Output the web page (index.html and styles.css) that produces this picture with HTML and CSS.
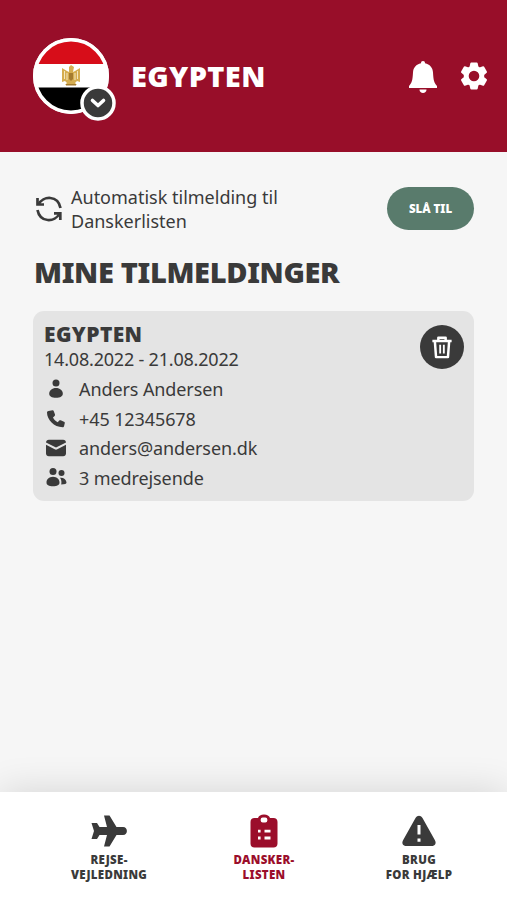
FILE: index.html
```html
<!DOCTYPE html>
<html lang="da">
<head>
  <meta charset="utf-8">
  <meta name="viewport" content="width=device-width, initial-scale=1">
  <title>Danskerlisten</title>
  <link rel="stylesheet" href="styles.css">
</head>
<body>
  <header>
    <button class="country">
      <svg class="flag" viewBox="0 0 76 76">
        <defs><clipPath id="round"><circle cx="38" cy="38" r="36"/></clipPath></defs>
        <circle cx="38" cy="38" r="38" fill="#fff"/>
        <g clip-path="url(#round)">
          <path fill="#d70d19" d="M0 0h76v26H0z"/>
          <path fill="#000" d="M0 49.500h76V76H0z"/>
        </g>
        <circle cx="38" cy="38" r="36.200" fill="none" stroke="#fff" stroke-width="3.600"/>
        <path fill="#d5ad50" d="M29 30l5 3 2 1V29l2-2 3 2-1 5 2-1 5-3v14l-3-1-2 2 2 2H32l2-2-2-2-3 1z"/>
        <path stroke="#f5e6be" d="M31.500 33v8M34 35v7M42 35v7M44.500 33v8"/>
        <path fill="#a57b2e" d="M36 35h4v6l-2 2-2-2zM33 46h10v1.500H33z"/>
      </svg>
      <svg class="chevron" viewBox="0 0 36 36">
        <circle cx="18" cy="18" r="16" fill="#3a3a3a" stroke="#fff" stroke-width="3.500"/>
        <path d="M12.500 15.500l5.500 5 5.500-5" fill="none" stroke="#fff" stroke-width="3.600" stroke-linecap="round" stroke-linejoin="round"/>
      </svg>
    </button>
    <h1>EGYPTEN</h1>
    <svg class="bell" viewBox="0 0 30 34" fill="#fff">
      <path d="M15 1c1.400 0 2 .9 2 2.300 4.800 1 7.700 4.300 8 9.200.4 7.500 1 10 4 13.500V28H1v-2c3-3.500 3.600-6 4-13.500.3-4.900 3.200-8.200 8-9.200C13 1.900 13.600 1 15 1z"/>
      <path d="M11.500 29.500h7c0 2-1.500 3.500-3.500 3.500s-3.500-1.500-3.500-3.500z"/>
    </svg>
    <svg class="gear" viewBox="0 0 28 28">
      <path fill="#fff" stroke="#fff" stroke-width="2" stroke-linejoin="round" fill-rule="evenodd" d="M11.300 1.500h5.400l.8 3.700 2.200 1.300 3.600-1.200 2.700 4.600-2.800 2.500v3.200l2.800 2.500-2.700 4.600-3.600-1.200-2.200 1.300-.8 3.700h-5.400l-.8-3.700-2.200-1.300-3.600 1.200L2 18.100l2.800-2.500v-3.200L2 9.900l2.700-4.600 3.600 1.200 2.200-1.300zM14 7.700a6.300 6.300 0 1 0 0 12.600 6.300 6.300 0 0 0 0-12.600z"/>
    </svg>
  </header>

  <main>
    <div class="auto">
      <svg class="sync" viewBox="0 0 28 26" fill="none" stroke="#3a3a3a" stroke-width="2.700">
        <path d="M3.500 8.500C8-.5 23-1 25.500 12M24.500 17.500C20 26.500 5 27 2.500 14"/>
        <path d="M2.500 2v6.500H9M19 17.300h6.300V24"/>
      </svg>
      <p>Automatisk tilmelding til Danskerlisten</p>
      <button class="enable">SLÅ TIL</button>
    </div>

    <h2>MINE TILMELDINGER</h2>

    <section class="card">
      <button class="delete">
        <svg viewBox="0 0 24 26" fill="none" stroke="#fff" stroke-width="2.700" stroke-linejoin="round">
          <path d="M1.500 6h21M8 6V2.300h8V6M4.200 6l1.300 17.500h13L19.800 6"/>
          <path d="M10 10v9.500M14 10v9.500" stroke-width="2"/>
        </svg>
      </button>
      <h3>EGYPTEN</h3>
      <p class="dates">14.08.2022 - 21.08.2022</p>
      <ul>
        <li>
          <svg viewBox="0 0 22 22"><circle cx="11" cy="5" r="3.500"/><path d="M11 10c4 0 6.800 2.700 6.800 5.700 0 2.500-2.500 4-6.800 4s-6.800-1.500-6.800-4C4.200 12.700 7 10 11 10z"/></svg>
          Anders Andersen
        </li>
        <li>
          <svg viewBox="0 0 22 22"><path d="M3.500 3l4-.8c.7-.1 1 .3 1.300 1L10 6.500c.2.600 0 1-.4 1.400L8 9.500c1 2 2.500 3.500 4.700 4.700l1.600-1.600c.4-.4.900-.5 1.400-.3l3.300 1.400c.7.300.9.700.8 1.300l-.7 3c-.2.900-.6 1.200-1.500 1.200C9 19.200 2 11.500 2 4.500c0-.9.500-1.300 1.500-1.500z"/></svg>
          +45 12345678
        </li>
        <li>
          <svg viewBox="0 0 22 22"><path d="M1 5.500C1 4 2.200 2.800 3.800 2.800h14.400C19.800 2.800 21 4 21 5.500L11 10.500z"/><path d="M1 7.700l8.700 4.600c1 .5 1.600.5 2.600 0L21 7.700v8.800c0 1.600-1.200 2.700-2.800 2.700H3.800C2.200 19.200 1 18.100 1 16.500z"/></svg>
          anders@andersen.dk
        </li>
        <li>
          <svg viewBox="0 0 22 22"><circle cx="8" cy="4.500" r="3.500"/><circle cx="16.500" cy="6" r="3"/><path d="M8 9.800c4 0 6.500 2.800 6.500 5.700 0 2.500-2.300 3.800-6.500 3.800s-6.500-1.300-6.500-3.800c0-2.900 2.500-5.700 6.500-5.700zM15 10.800c3.800-.3 6 1.700 6.500 4.500.2 1.500-1.500 2.200-5.300 2.200.5-2.500.3-4.700-1.200-6.700z"/></svg>
          3 medrejsende
        </li>
      </ul>
    </section>
  </main>

  <nav>
    <a>
      <svg viewBox="0 0 36 34" fill="#3a3a3a"><path d="M13 1.500h5.500L25.500 13H32c5.200 0 5.200 8 0 8h-6.500l-7 11.500H13L16 21H8.500L6 25H.5L3 17 .5 9H6l2.500 4H16z"/></svg>
      <span>REJSE-</span>
      <span>VEJLEDNING</span>
    </a>
    <a class="active">
      <svg viewBox="0 0 36 34">
        <path fill="#9b0e2b" d="M8.500 4H12c.7-2.200 2.800-3.500 6-3.500s5.300 1.300 6 3.500h3.500c2.500 0 4 1.500 4 4v21.500c0 2.500-1.500 4-4 4h-19c-2.500 0-4-1.500-4-4V8c0-2.500 1.500-4 4-4z"/>
        <rect x="14.700" y="3.500" width="6.600" height="5" rx="2" fill="#fff"/>
        <path d="M12 17.200h2.600M18.500 17.200h6M12 24h2.600M18.500 24h6" stroke="#fff" stroke-width="2.800"/>
      </svg>
      <span>DANSKER-</span>
      <span>LISTEN</span>
    </a>
    <a>
      <svg viewBox="0 0 36 34">
        <path fill="#3a3a3a" d="M14.500 4c2-3 5-3 7 0l12.300 22c1.900 3.300.4 6-3.300 6h-25c-3.700 0-5.200-2.700-3.300-6z"/>
        <path d="M18 11v9.500M18 24.500v3.200" stroke="#fff" stroke-width="3"/>
      </svg>
      <span>BRUG</span>
      <span>FOR HJÆLP</span>
    </a>
  </nav>
</body>
</html>
```
FILE: styles.css
```css
* {
  box-sizing: border-box;
  margin: 0;
  padding: 0;
}
body {
  display: flex;
  flex-direction: column;
  height: 900px;
  background: #f6f6f6;
  color: #3a3a3a;
  font-family: "Noto Sans", sans-serif;
  font-size: 18px;
  overflow: hidden;
}
button {
  border: none;
  background: transparent;
  font-family: inherit;
}
svg {
  display: block;
  flex-shrink: 0;
}
h1, h2, h3 {
  font-weight: 900;
  white-space: nowrap;
}
header {
  display: flex;
  align-items: center;
  height: 152px;
  padding: 0 19px 0 33px;
  background: #980e29;
}
.country {
  position: relative;
  width: 76px;
  height: 76px;
}
.flag {
  width: 76px;
  height: 76px;
}
.chevron {
  position: absolute;
  left: 47px;
  top: 47px;
  width: 36px;
  height: 36px;
}
h1 {
  flex: 1;
  margin-left: 22px;
  color: #fff;
  font-size: 29px;
  line-height: 40px;
  letter-spacing: .35px;
}
.bell {
  width: 30px;
  height: 34px;
  margin: 2px 22px 0 0;
}
.gear {
  width: 28px;
  height: 28px;
}
main {
  flex: 1;
  padding: 33px 33px 0 34px;
}
.auto {
  display: flex;
  align-items: center;
  height: 48px;
}
.sync {
  width: 28px;
  height: 26px;
  margin-left: 1px;
}
.auto p {
  width: 230px;
  margin-left: 8px;
  line-height: 24px;
}
.enable {
  width: 87px;
  height: 43px;
  margin: -2px 0 0 auto;
  border-radius: 22px;
  background: #597b6c;
  color: #fff;
  font-size: 11.5px;
  font-weight: 900;
}
h2 {
  margin-top: 19px;
  font-size: 29px;
  line-height: 40px;
  letter-spacing: -.35px;
}
.card {
  position: relative;
  height: 190px;
  margin: 19px 0 0 -1px;
  padding: 9px 11px;
  border-radius: 11px;
  background: #e4e4e4;
}
.delete {
  position: absolute;
  top: 14px;
  right: 10px;
  display: flex;
  align-items: center;
  justify-content: center;
  width: 44px;
  height: 44px;
  border-radius: 50%;
  background: #3a3a3a;
}
.delete svg {
  width: 22px;
  height: 25px;
}
h3 {
  font-size: 21px;
  line-height: 28px;
  letter-spacing: .4px;
}
.dates {
  line-height: 22px;
  letter-spacing: -.2px;
}
ul {
  margin-top: 4px;
  list-style: none;
}
li {
  display: flex;
  align-items: center;
  gap: 12px;
  height: 29.7px;
  padding-left: 1px;
  line-height: 24px;
  letter-spacing: -.1px;
}
li svg {
  width: 22px;
  height: 22px;
  fill: #3a3a3a;
}
nav {
  display: grid;
  grid-template-columns: 155px 155px 155px;
  justify-content: center;
  height: 108px;
  padding: 22px 0 0 21px;
  background: #fff;
  box-shadow: 0 0 38px rgba(0, 0, 0, .14);
}
nav a {
  display: flex;
  flex-direction: column;
  align-items: center;
  color: #3a3a3a;
  font-size: 11.5px;
  font-weight: 900;
  line-height: 15px;
  letter-spacing: .3px;
}
nav svg {
  width: 36px;
  height: 34px;
  margin-bottom: 4px;
}
nav .active {
  color: #9b0e2b;
}
```
